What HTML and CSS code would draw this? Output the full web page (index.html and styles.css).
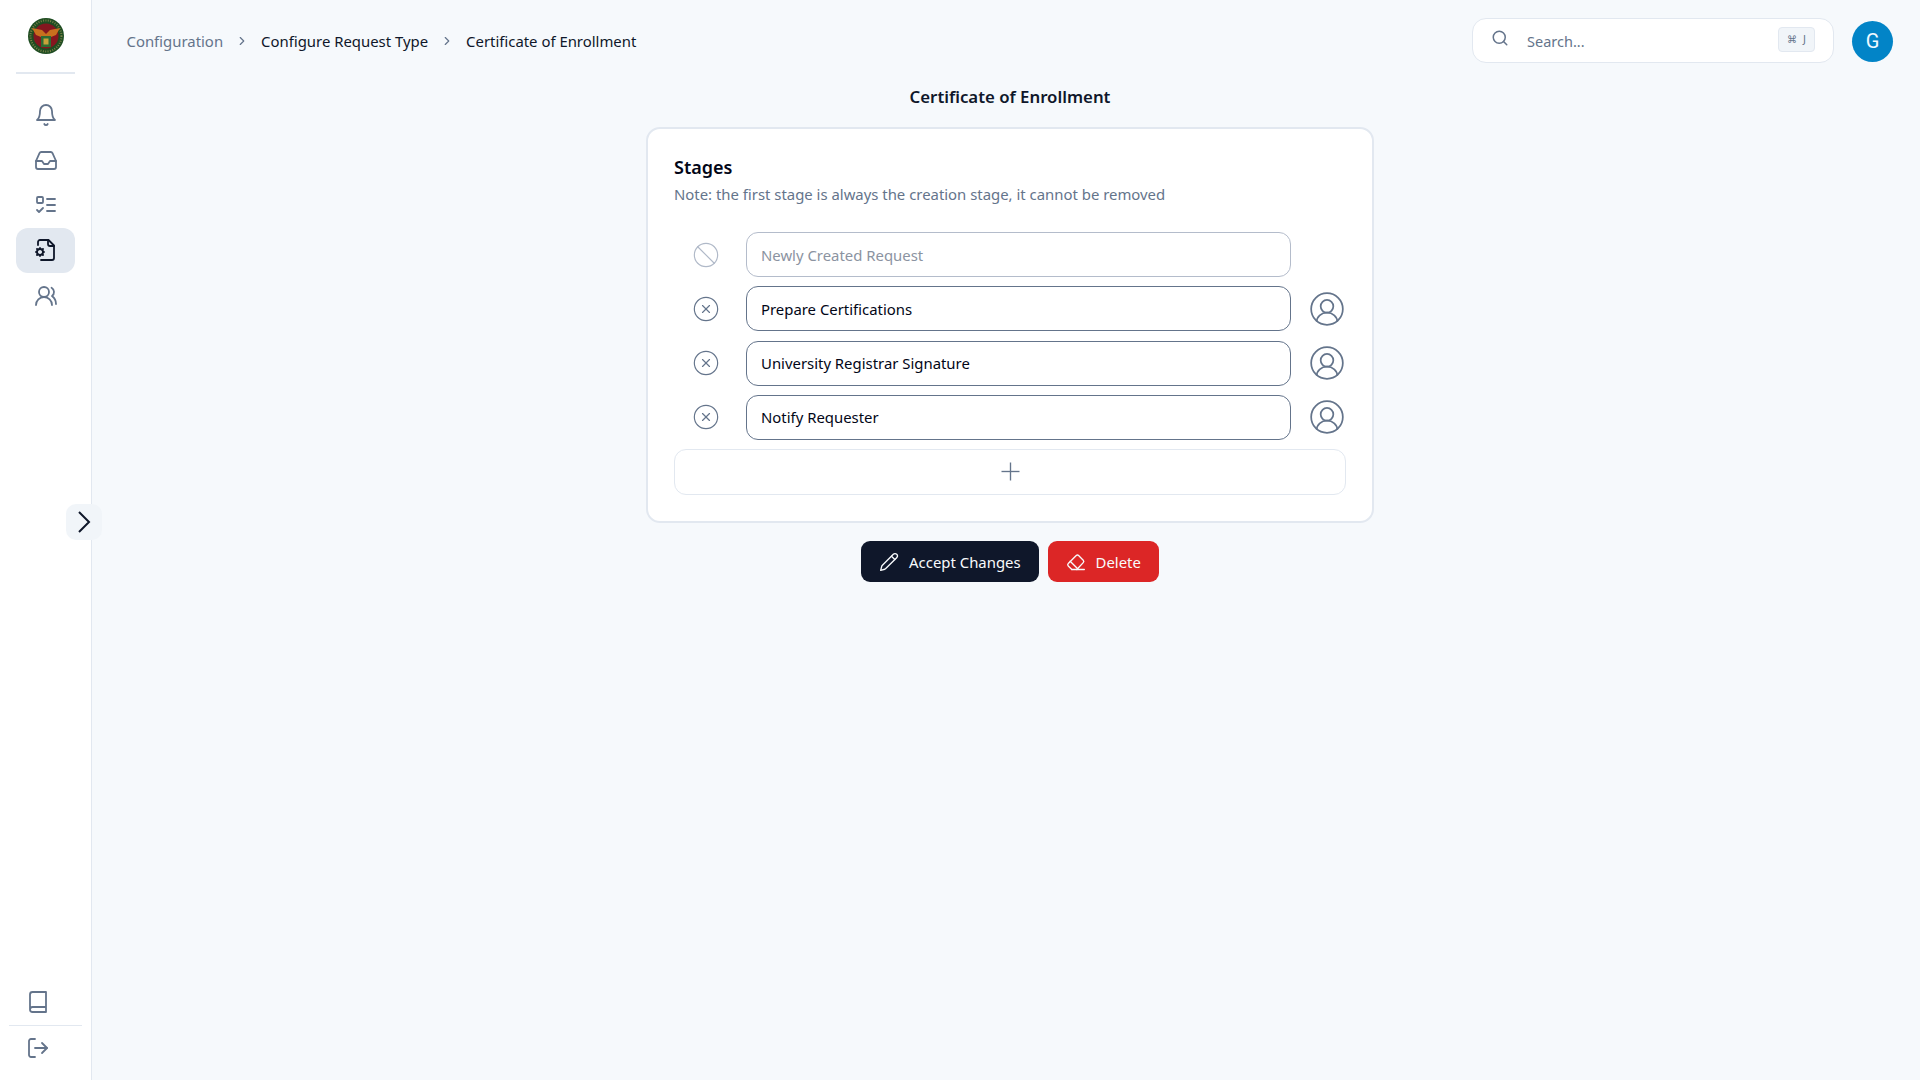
FILE: index.html
```html
<!DOCTYPE html>
<html lang="en">
<head>
  <title>Certificate of Enrollment</title>
  <meta charset="utf-8">
  <link rel="stylesheet" href="styles.css">
</head>
<body>
<div class="app">
  <aside class="sidebar">
    <div class="logo">
      <svg width="36" height="36" viewBox="0 0 36 36">
        <circle cx="18" cy="18" r="18" fill="#1f4d22"/>
        <circle cx="18" cy="18" r="15.500" fill="none" stroke="#b9a760" stroke-width="2" stroke-dasharray="1 1.400" opacity="0.6"/>
        <circle cx="18" cy="18" r="12.500" fill="#85161f"/>
        <path d="M4 10l10 2 4 4 4-4 10-2-4 7-5 2h-10l-5-2z" fill="#c8701e"/>
        <rect x="13" y="18" width="10" height="11" fill="#2f6b33"/>
        <rect x="15.500" y="20.500" width="5" height="6" fill="#c9a23a"/>
      </svg>
    </div>
    <nav class="nav">
      <a class="nav-item">
        <svg class="icon" viewBox="0 0 24 24"><path d="M6 8a6 6 0 0 1 12 0c0 7 3 9 3 9H3s3-2 3-9"/><path d="M10.300 21a1.900 1.900 0 0 0 3.400 0"/></svg>
      </a>
      <a class="nav-item">
        <svg class="icon" viewBox="0 0 24 24"><path d="M22 13h-6l-2 3h-4l-2-3H2"/><path d="M5.500 5.100 2 13v6a2 2 0 0 0 2 2h16a2 2 0 0 0 2-2v-6l-3.500-7.900A2 2 0 0 0 16.800 4H7.200a2 2 0 0 0-1.700 1.100z"/></svg>
      </a>
      <a class="nav-item">
        <svg class="icon" viewBox="0 0 24 24"><rect x="3" y="4" width="6" height="6" rx="1"/><path d="m3 17 2 2 4-4"/><path d="M13 6h8"/><path d="M13 12h8"/><path d="M13 18h8"/></svg>
      </a>
      <a class="nav-item active">
        <svg class="icon" viewBox="0 0 24 24"><path d="M14 2v4a2 2 0 0 0 2 2h4"/><path d="M4 7V4a2 2 0 0 1 2-2h8.500L20 7.500V20a2 2 0 0 1-2 2H7"/><circle cx="6" cy="14" r="3"/><path d="M6 10v1M6 17v1M10 14H9M3 14H2M9 11l-.75.75M3.750 16.250 3 17M9 17l-.75-.75M3.750 11.750 3 11"/></svg>
      </a>
      <a class="nav-item">
        <svg class="icon" viewBox="0 0 24 24"><path d="M18 21a8 8 0 0 0-16 0"/><circle cx="10" cy="8" r="5"/><path d="M22 20c0-3.370-2-6.500-4-8a5 5 0 0 0-.45-8.300"/></svg>
      </a>
    </nav>
    <div class="sidebar-foot">
      <a class="foot-item">
        <svg class="icon" viewBox="0 0 24 24"><path d="M4 19.500v-15A2.500 2.500 0 0 1 6.500 2H20v20H6.500a2.500 2.500 0 0 1 0-5H20"/></svg>
      </a>
      <a class="foot-item foot-last">
        <svg class="icon" viewBox="0 0 24 24"><path d="M9 21H5a2 2 0 0 1-2-2V5a2 2 0 0 1 2-2h4"/><path d="m16 17 5-5-5-5"/><path d="M21 12H9"/></svg>
      </a>
    </div>
    <button class="collapse" type="button">
      <svg width="24" height="24" viewBox="0 0 24 24"><path d="m7 2 10 10L7 22"/></svg>
    </button>
  </aside>

  <main class="main">
    <header class="topbar">
      <div class="crumbs">
        <span class="crumb-muted">Configuration</span>
        <svg class="chev" viewBox="0 0 24 24"><path d="m9 18 6-6-6-6"/></svg>
        <span>Configure Request Type</span>
        <svg class="chev" viewBox="0 0 24 24"><path d="m9 18 6-6-6-6"/></svg>
        <span>Certificate of Enrollment</span>
      </div>
      <div class="top-right">
        <div class="search">
          <svg class="search-icon" viewBox="0 0 24 24"><circle cx="11" cy="11" r="8"/><path d="m21 21-4.300-4.300"/></svg>
          <span class="search-text">Search...</span>
          <kbd class="kbd">⌘ J</kbd>
        </div>
        <div class="avatar">G</div>
      </div>
    </header>

    <section class="content">
      <h1 class="page-title">Certificate of Enrollment</h1>
      <div class="card">
        <h2 class="card-title">Stages</h2>
        <p class="card-note">Note: the first stage is always the creation stage, it cannot be removed</p>

        <div class="stages">
          <div class="stage disabled">
            <svg class="stage-btn" viewBox="0 0 24 24"><circle cx="12" cy="12" r="10"/><path d="m4.900 4.900 14.200 14.200"/></svg>
            <div class="stage-input">Newly Created Request</div>
            <span class="stage-user-empty"></span>
          </div>
          <div class="stage">
            <svg class="stage-btn" viewBox="0 0 24 24"><circle cx="12" cy="12" r="10"/><path d="m15 9-6 6"/><path d="m9 9 6 6"/></svg>
            <div class="stage-input">Prepare Certifications</div>
            <svg class="stage-user" viewBox="0 0 24 24"><circle cx="12" cy="12" r="10"/><circle cx="12" cy="10.300" r="4"/><path d="M5.500 20a6.500 5.700 0 0 1 13 0"/></svg>
          </div>
          <div class="stage">
            <svg class="stage-btn" viewBox="0 0 24 24"><circle cx="12" cy="12" r="10"/><path d="m15 9-6 6"/><path d="m9 9 6 6"/></svg>
            <div class="stage-input">University Registrar Signature</div>
            <svg class="stage-user" viewBox="0 0 24 24"><circle cx="12" cy="12" r="10"/><circle cx="12" cy="10.300" r="4"/><path d="M5.500 20a6.500 5.700 0 0 1 13 0"/></svg>
          </div>
          <div class="stage">
            <svg class="stage-btn" viewBox="0 0 24 24"><circle cx="12" cy="12" r="10"/><path d="m15 9-6 6"/><path d="m9 9 6 6"/></svg>
            <div class="stage-input">Notify Requester</div>
            <svg class="stage-user" viewBox="0 0 24 24"><circle cx="12" cy="12" r="10"/><circle cx="12" cy="10.300" r="4"/><path d="M5.500 20a6.500 5.700 0 0 1 13 0"/></svg>
          </div>
          <button class="add-stage" type="button">
            <svg class="add-icon" viewBox="0 0 24 24"><path d="M12 4v16"/><path d="M4 12h16"/></svg>
          </button>
        </div>
      </div>

      <div class="actions">
        <button class="btn btn-dark" type="button">
          <svg class="btn-icon" viewBox="0 0 24 24"><path d="M21.200 6.800a2.800 2.800 0 0 0-4-4L3.800 16.200a2 2 0 0 0-.5.900L2 22l4.900-1.300a2 2 0 0 0 .9-.5z"/><path d="m15 5 4 4"/></svg>
          Accept Changes
        </button>
        <button class="btn btn-red" type="button">
          <svg class="btn-icon" viewBox="0 0 24 24"><path d="m7 21-4.300-4.300a2 2 0 0 1 0-2.800l9.600-9.600a2 2 0 0 1 2.800 0l5.600 5.600a2 2 0 0 1 0 2.800L13 21"/><path d="M22 21H7"/><path d="m5 11 9 9"/></svg>
          Delete
        </button>
      </div>
    </section>
  </main>
</div>
</body>
</html>
```

FILE: styles.css
```css
* {
  box-sizing: border-box;
}

body {
  margin: 0;
  font-family: "Noto Sans", "Open Sans", sans-serif;
  font-size: 14.900px;
  color: #0f172a;
  background-color: #f6f9fc;
  overflow: hidden;
}

.app {
  display: flex;
  height: 1080px;
}

/* sidebar */
.sidebar {
  position: relative;
  width: 92px;
  flex: none;
  display: flex;
  flex-direction: column;
  background-color: #fff;
  border-right: 1px solid #e2e8f0;
}

.logo {
  display: flex;
  justify-content: center;
  padding-top: 18px;
  padding-bottom: 18px;
}

.nav {
  display: flex;
  flex-direction: column;
  margin: 0 16px;
  padding-top: 18px;
  border-top: 2px solid #e2e8f0;
  gap: 0.300px;
}

.nav-item {
  display: flex;
  align-items: center;
  justify-content: center;
  height: 45px;
  border-radius: 12px;
  color: #64748b;
}

.nav-item.active {
  background-color: #e2e8f0;
  color: #0f172a;
}

.icon {
  width: 24px;
  height: 24px;
  fill: none;
  stroke: currentColor;
  stroke-width: 1.800;
  stroke-linecap: round;
  stroke-linejoin: round;
}

.sidebar-foot {
  margin-top: auto;
  display: flex;
  flex-direction: column;
  padding: 0 9px 9px;
  color: #64748b;
}

.foot-item {
  display: flex;
  padding: 11px 0 0 17px;
  height: 46px;
}

.foot-last {
  border-top: 1px solid #e2e8f0;
  padding-top: 10px;
}

.collapse {
  position: absolute;
  left: 66px;
  top: 504px;
  width: 36px;
  height: 36px;
  padding: 0;
  display: flex;
  align-items: center;
  justify-content: center;
  border: 0;
  border-radius: 10px;
  background-color: #f1f5f9;
}

.collapse svg {
  fill: none;
  stroke: #0f172a;
  stroke-width: 2;
}

/* main */
.main {
  flex: 1;
  min-width: 0;
  display: flex;
  flex-direction: column;
}

.topbar {
  display: flex;
  align-items: center;
  justify-content: space-between;
  height: 82px;
  padding: 0 27px 0 34.500px;
}

.crumbs {
  display: flex;
  align-items: center;
  gap: 12px;
  color: #0f172a;
}

.crumb-muted {
  color: #64748b;
}

.chev {
  width: 14px;
  height: 14px;
  fill: none;
  stroke: #64748b;
  stroke-width: 2;
  stroke-linecap: round;
  stroke-linejoin: round;
}

.top-right {
  display: flex;
  align-items: center;
  gap: 18px;
}

.search {
  display: flex;
  align-items: center;
  width: 362px;
  height: 45px;
  margin-bottom: 2px;
  padding: 0 18px;
  border: 1px solid #e2e8f0;
  border-radius: 14px;
  background-color: #fff;
  color: #64748b;
}

.search-icon {
  width: 18px;
  height: 18px;
  margin-top: -5px;
  fill: none;
  stroke: #64748b;
  stroke-width: 2;
  stroke-linecap: round;
}

.search-text {
  flex: 1;
  margin-top: 1px;
  margin-left: 18px;
  font-size: 14.500px;
}

.kbd {
  width: 37px;
  height: 25px;
  margin-top: -1px;
  display: flex;
  align-items: center;
  justify-content: center;
  border: 1px solid #e2e8f0;
  border-radius: 4px;
  background-color: #f1f5f9;
  font-family: "DejaVu Sans", sans-serif;
  font-size: 10px;
  white-space: pre;
  word-spacing: 3px;
}

.avatar {
  width: 41px;
  height: 41px;
  display: flex;
  align-items: center;
  justify-content: center;
  border-radius: 50%;
  background-color: #0284c7;
  color: #f0f9ff;
  font-family: Roboto, sans-serif;
  font-size: 20px;
}

.content {
  display: flex;
  flex-direction: column;
  align-items: center;
  padding-left: 8px;
}

.page-title {
  margin: 0 0 16px;
  height: 29px;
  font-size: 16.800px;
  font-weight: 600;
  line-height: 29px;
}

.card {
  width: 728px;
  height: 396px;
  padding: 24px 26px;
  border: 2px solid #e2e8f0;
  border-radius: 14px;
  background-color: #fff;
}

.card-title {
  margin: 0;
  font-size: 18px;
  font-weight: 600;
  line-height: 28px;
  color: #020617;
}

.card-note {
  margin: 0 0 25px;
  line-height: 26px;
  color: #64748b;
}

.stages {
  display: flex;
  flex-direction: column;
  gap: 8.700px;
}

.stage {
  display: flex;
  align-items: center;
  height: 45.500px;
}

.stage-btn {
  width: 28px;
  height: 28px;
  flex: none;
  margin-left: 18px;
  fill: none;
  stroke: #64748b;
  stroke-width: 1;
  stroke-linecap: round;
}

.stage-input {
  flex: 1;
  height: 45px;
  margin-left: 26px;
  padding-left: 14px;
  display: flex;
  align-items: center;
  border: 1px solid #64748b;
  border-radius: 12px;
  color: #020617;
}

.stage-user {
  width: 38px;
  height: 38px;
  flex: none;
  margin-left: 17px;
  fill: none;
  stroke: #64748b;
  stroke-width: 1.100;
}

.stage-user-empty {
  width: 38px;
  flex: none;
  margin-left: 17px;
}

.disabled .stage-btn {
  stroke: #b0b9c8;
}

.disabled .stage-input {
  border-color: #b4bccb;
  color: #8b93a1;
}

.add-stage {
  height: 46px;
  padding: 0;
  display: flex;
  align-items: center;
  justify-content: center;
  border: 1px solid #e2e8f0;
  border-radius: 12px;
  background-color: #fff;
}

.add-icon {
  width: 27px;
  height: 27px;
  fill: none;
  stroke: #64748b;
  stroke-width: 1.200;
}

.actions {
  display: flex;
  gap: 9px;
  margin-top: 18px;
}

.btn {
  display: flex;
  align-items: center;
  gap: 10px;
  height: 41px;
  padding: 0 18px;
  border: 0;
  border-radius: 9px;
  color: #f8fafc;
  font-family: inherit;
  font-size: 14.900px;
}

.btn-dark {
  background-color: #0f172a;
}

.btn-red {
  background-color: #dc2626;
}

.btn-icon {
  width: 20px;
  height: 20px;
  fill: none;
  stroke: currentColor;
  stroke-width: 1.600;
  stroke-linecap: round;
  stroke-linejoin: round;
}
```
